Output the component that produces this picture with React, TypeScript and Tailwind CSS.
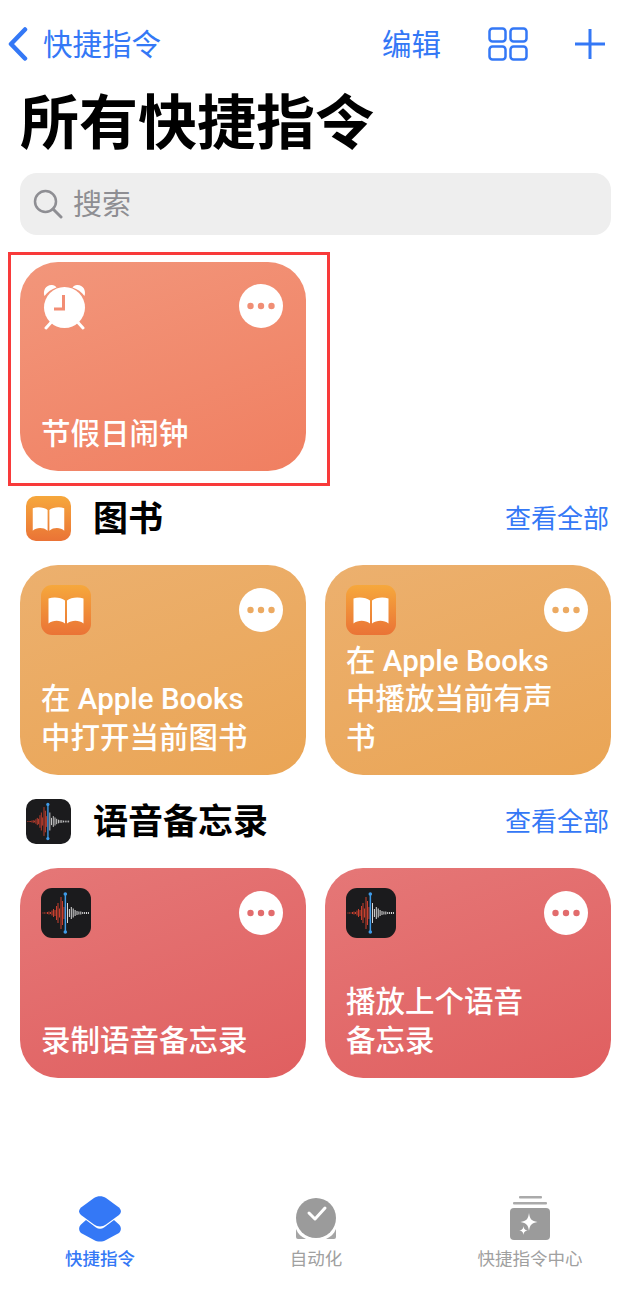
import React from "react";

const BLUE = "#3478f6";

const leftBars = [1, 1, 1, 2, 3, 2, 5, 8, 6, 14, 20, 9, 32, 24, 12];
const rightBars = [20, 8, 12, 9, 6, 4, 3, 3, 2, 2, 2, 2];

const BookIcon = ({ className }: { className: string }) => (
  <svg viewBox="0 0 50 50" className={className}>
    <defs>
      <linearGradient id="book-grad" x1="0" y1="0" x2="0" y2="1">
        <stop offset="0" stopColor="#f6a83c" />
        <stop offset="1" stopColor="#ea7336" />
      </linearGradient>
    </defs>
    <rect width="50" height="50" rx="11" fill="url(#book-grad)" />
    <path
      d="M24 15.500C20.500 12.500 13 11.500 7.500 13.500V38.500C11.500 35 19 34.500 24 38.500Z"
      fill="#fff"
    />
    <path
      d="M26 15.500C29.500 12.500 37 11.500 42.500 13.500V38.500C38.500 35 31 34.500 26 38.500Z"
      fill="#fff"
    />
  </svg>
);

const VoiceIcon = ({ className }: { className: string }) => (
  <svg viewBox="0 0 50 50" className={className}>
    <rect width="50" height="50" rx="11" fill="#1b1b1d" />
    {leftBars.map((h, i) => (
      <rect
        key={i}
        x={1.500 + i * 1.5}
        y={25 - h / 2}
        width="1"
        height={h}
        fill="#c9402f"
      />
    ))}
    {rightBars.map((h, i) => (
      <rect
        key={i}
        x={26 + i * 1.9}
        y={25 - h / 2}
        width="1"
        height={h}
        fill="#d8d8d8"
      />
    ))}
    <rect x="23.600" y="6" width="1.500" height="38" fill="#3f9be8" />
    <circle cx="24.300" cy="6" r="1.800" fill="#3f9be8" />
    <circle cx="24.300" cy="44" r="1.800" fill="#3f9be8" />
  </svg>
);

const AlarmIcon = () => (
  <svg viewBox="0 0 46 46" className="h-[46px] w-[46px]">
    <path d="M3.500 12C1.500 6 5.500 .5 11 1c2 .2 3.500 1 4.500 2.500C10.500 5 6.500 8 3.500 12Z" fill="#fff" />
    <path d="M43.500 12C45.500 6 41.500 .5 36 1c-2 .2-3.500 1-4.500 2.500C36.500 5 40.500 8 43.500 12Z" fill="#fff" />
    <path d="M10 38.500 5 44M37 38.500 42 44" stroke="#fff" strokeWidth="3" strokeLinecap="round" />
    <circle cx="23.500" cy="23.500" r="20.500" fill="#fff" />
    <path d="M22.500 11V25H13" fill="none" stroke="#f28d74" strokeWidth="3" />
  </svg>
);

const MoreButton = ({ dot }: { dot: string }) => (
  <svg viewBox="0 0 44 44" className="h-11 w-11 shrink-0">
    <circle cx="22" cy="22" r="22" fill="#fff" />
    <circle cx="11.500" cy="22" r="3.200" fill={dot} />
    <circle cx="22" cy="22" r="3.200" fill={dot} />
    <circle cx="32.500" cy="22" r="3.200" fill={dot} />
  </svg>
);

const Card = ({
  bg,
  dot,
  icon,
  lines,
}: {
  bg: string;
  dot: string;
  icon: React.ReactNode;
  lines: string[];
}) => (
  <div className={`flex h-[210px] flex-col justify-between rounded-[38px] pt-[20px] pr-[23px] pb-[18px] pl-[21px] ${bg}`}>
    <div className="flex items-start justify-between">
      {icon}
      <div className="pt-[3px]">
        <MoreButton dot={dot} />
      </div>
    </div>
    <div className="text-[29.5px] leading-[38.5px] font-medium text-white">
      {lines.map((l) => (
        <div key={l}>{l}</div>
      ))}
    </div>
  </div>
);

const SectionHeader = ({
  icon,
  title,
}: {
  icon: React.ReactNode;
  title: string;
}) => (
  <div className="flex h-[45px] items-center pr-[27px] pl-[26px]">
    {icon}
    <span className="ml-[22px] pt-[1px] text-[35px] leading-[45px] font-bold text-black">
      {title}
    </span>
    <span className="ml-auto pt-[1px] text-[26px] leading-[45px] text-[#3478f6]">
      查看全部
    </span>
  </div>
);

const orange = "bg-linear-160 from-[#ecb06e] to-[#eaa555]";
const rose = "bg-linear-160 from-[#e57777] to-[#e05f60]";

const App = () => {
  return (
    <div
      className="flex h-[1292px] w-[636px] flex-col overflow-hidden bg-white"
      style={{ fontFamily: 'Roboto, "Noto Sans CJK SC", sans-serif' }}
    >
      <div className="mt-[27px] flex h-[34px] items-center pr-[31px] pl-[8px] text-[29.5px] leading-[34px] text-[#3478f6]">
        <svg viewBox="0 0 20 34" className="h-[34px] w-[20px]">
          <path d="M17 2.500 3 17l14 14.500" fill="none" stroke={BLUE} strokeWidth="4.500" strokeLinecap="round" strokeLinejoin="round" />
        </svg>
        <span className="ml-[15px] pt-[2px]">快捷指令</span>
        <span className="ml-auto pt-[2px]">编辑</span>
        <svg viewBox="0 0 40 34" className="ml-[47px] h-[34px] w-[40px]">
          <g fill="none" stroke={BLUE} strokeWidth="2.500">
            <rect x="1.500" y="1.500" width="16" height="13" rx="3" />
            <rect x="22.500" y="1.500" width="16" height="13" rx="3" />
            <rect x="1.500" y="19.500" width="16" height="13" rx="3" />
            <rect x="22.500" y="19.500" width="16" height="13" rx="3" />
          </g>
        </svg>
        <svg viewBox="0 0 30 30" className="ml-[47px] h-[30px] w-[30px]">
          <path d="M15 0v30M0 15h30" stroke={BLUE} strokeWidth="3" />
        </svg>
      </div>

      <h1 className="mt-[27px] pl-[20px] text-[59px] leading-[72px] font-bold text-black">
        所有快捷指令
      </h1>

      <div className="mt-[13px] ml-[20px] flex h-[62px] w-[591px] items-center rounded-[17px] bg-[#eeeeee] pl-[13px] text-[29px] text-[#8e8e93]">
        <svg viewBox="0 0 30 30" className="h-[30px] w-[30px]">
          <circle cx="12.500" cy="12.500" r="10.500" fill="none" stroke="#8e8e93" strokeWidth="2.500" />
          <path d="M20 20l8 8" stroke="#8e8e93" strokeWidth="3" strokeLinecap="round" />
        </svg>
        <span className="ml-[10px] pt-[4px]">搜索</span>
      </div>

      <div className="mt-[17px] ml-[8px] h-[234px] w-[322px] border-[3px] border-[#f83a3a] pt-[7px] pl-[9px]">
        <div className="flex h-[209px] w-[286px] flex-col justify-between rounded-[38px] bg-linear-160 from-[#f2967b] to-[#f07f61] pt-[22px] pr-[23px] pb-[18px] pl-[21px]">
          <div className="flex items-start justify-between">
            <AlarmIcon />
            <MoreButton dot="#f08e75" />
          </div>
          <div className="text-[29.5px] leading-[38.5px] font-medium text-white">
            节假日闹钟
          </div>
        </div>
      </div>

      <div className="mt-[10px]">
        <SectionHeader icon={<BookIcon className="h-[45px] w-[45px]" />} title="图书" />
      </div>
      <div className="mt-[24px] ml-[20px] grid w-[591px] grid-cols-2 gap-[19px]">
        <Card
          bg={orange}
          dot="#ecaa62"
          icon={<BookIcon className="h-[50px] w-[50px]" />}
          lines={["在 Apple Books", "中打开当前图书"]}
        />
        <Card
          bg={orange}
          dot="#ecaa62"
          icon={<BookIcon className="h-[50px] w-[50px]" />}
          lines={["在 Apple Books", "中播放当前有声", "书"]}
        />
      </div>

      <div className="mt-[24px]">
        <SectionHeader icon={<VoiceIcon className="h-[45px] w-[45px]" />} title="语音备忘录" />
      </div>
      <div className="mt-[24px] ml-[20px] grid w-[591px] grid-cols-2 gap-[19px]">
        <Card
          bg={rose}
          dot="#e26c6d"
          icon={<VoiceIcon className="h-[50px] w-[50px]" />}
          lines={["录制语音备忘录"]}
        />
        <Card
          bg={rose}
          dot="#e26c6d"
          icon={<VoiceIcon className="h-[50px] w-[50px]" />}
          lines={["播放上个语音", "备忘录"]}
        />
      </div>

      <div className="mt-auto mb-[21px] flex">
        <div className="flex w-[200px] flex-col items-center">
          <svg viewBox="0 0 42 46" className="h-[46px] w-[42px]">
            <path d="M7 24 2 28.500c-2.500 2.500-2.500 6 0 8.500l13 7c3.500 2 8.500 2 12 0l13-7c2.500-2.500 2.500-6 0-8.500L35 24 25 31.500c-2.500 1.800-5.500 1.800-8 0Z" fill={BLUE} />
            <path d="M15 2 2 11.500c-2.500 2.500-2.500 5 0 7.500l13 9.500c3.500 2.500 8.500 2.500 12 0L40 19c2.500-2.500 2.500-5 0-7.500L27 2c-3.500-2.500-8.500-2.500-12 0Z" fill={BLUE} />
          </svg>
          <span className="mt-[5px] text-[17.5px] leading-[24px] font-medium text-[#3478f6]">快捷指令</span>
        </div>
        <div className="flex w-[232px] flex-col items-center">
          <svg viewBox="0 0 42 46" className="h-[46px] w-[42px]">
            <path d="M1 33v8a2 2 0 0 0 2 2h8C6.500 41 3 38 1 33ZM41 33v8a2 2 0 0 1-2 2h-8c4.500-2 8-5 10-10Z" fill="#a5a5a5" />
            <circle cx="21" cy="22" r="20" fill="#9b9b9b" />
            <path d="M14 17l6 6 10-11" fill="none" stroke="#fff" strokeWidth="3" strokeLinecap="round" strokeLinejoin="round" />
          </svg>
          <span className="mt-[5px] text-[17.5px] leading-[24px] text-[#a0a0a0]">自动化</span>
        </div>
        <div className="flex w-[196px] flex-col items-center">
          <svg viewBox="0 0 42 46" className="h-[46px] w-[42px]">
            <rect x="10" y="0" width="23" height="2.500" rx="1" fill="#aaaaaa" />
            <rect x="4" y="6" width="34" height="2.500" rx="1" fill="#aaaaaa" />
            <rect x="1" y="12" width="40" height="32" rx="4" fill="#9b9b9b" />
            <path d="M20 17c.8 6 2.500 8 8.500 9-6 1-7.700 3-8.500 9-.8-6-2.500-8-8.500-9 6-1 7.700-3 8.500-9Z" fill="#fff" />
            <path d="M14.500 30c.4 3 1 3.700 4.200 4.500-3.200.8-3.800 1.500-4.200 4.500-.4-3-1-3.700-4.200-4.500 3.200-.8 3.800-1.500 4.200-4.500Z" fill="#fff" />
          </svg>
          <span className="mt-[5px] text-[17.5px] leading-[24px] text-[#a0a0a0]">快捷指令中心</span>
        </div>
      </div>
    </div>
  );
};

export default App;
